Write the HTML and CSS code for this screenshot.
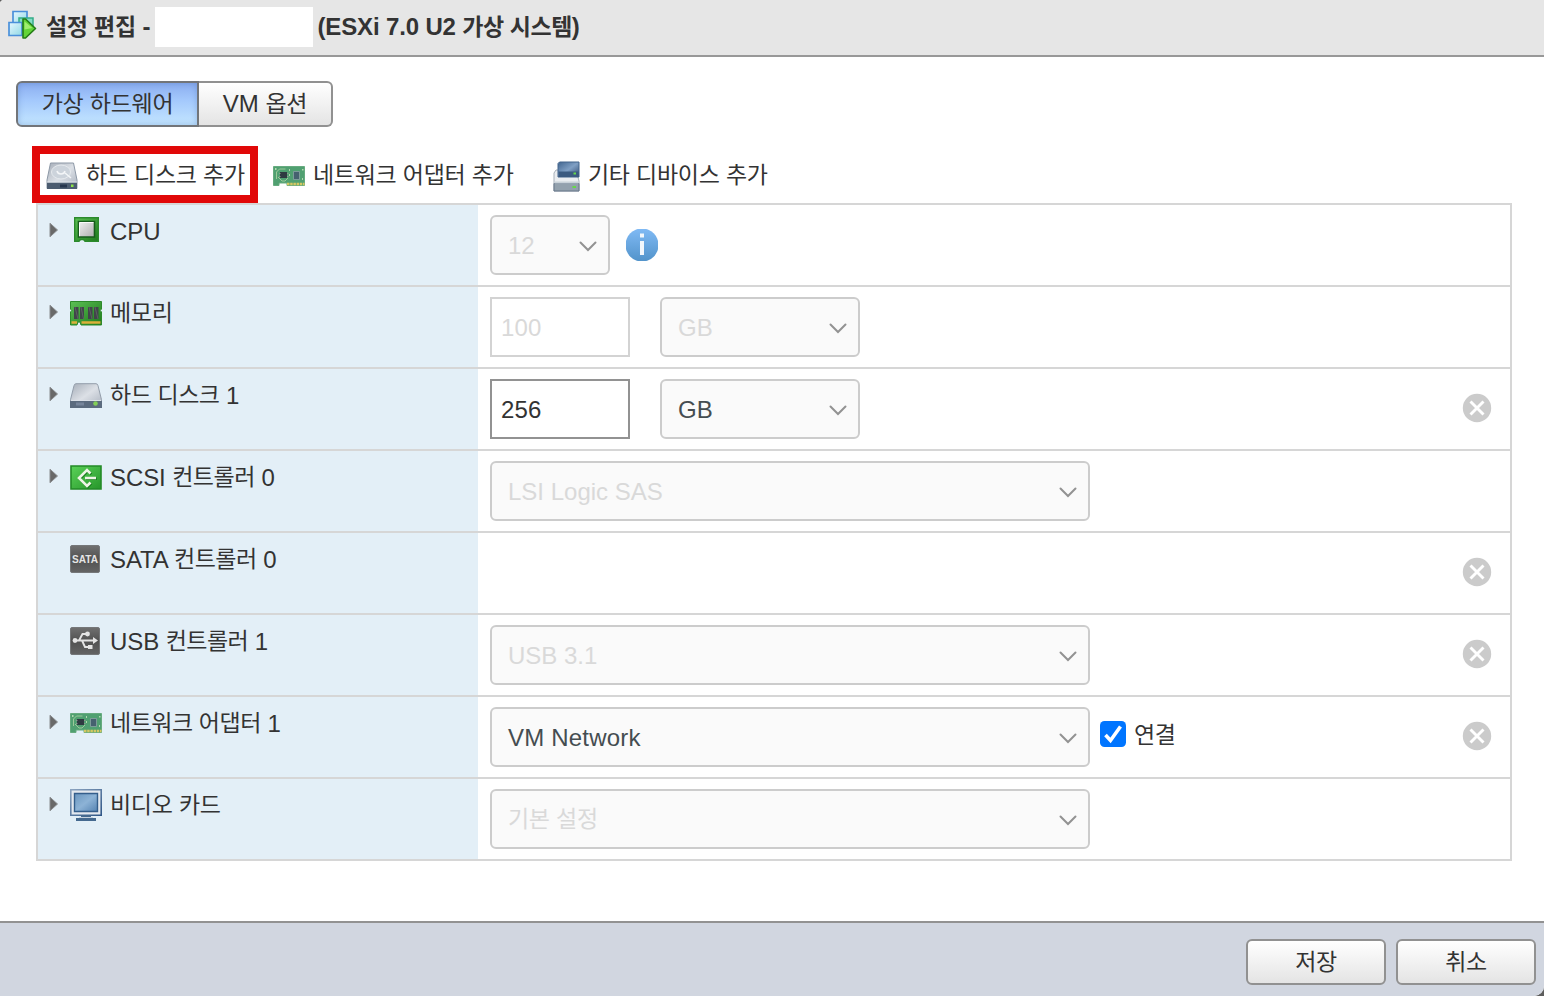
FILE: index.html
```html
<!DOCTYPE html>
<html lang="ko">
    <head>
        <meta charset="utf-8" />
        <title>설정 편집</title>
        <link rel="stylesheet" href="styles.css">
    </head>

    <body>
        <!-- shared icons -->
        <svg class="sprite" width="0" height="0">
            <defs>
                <linearGradient id="g-metal" x1="0" y1="0" x2="1" y2="1">
                    <stop offset="0" stop-color="#a5adb8" />
                    <stop offset=".5" stop-color="#dce0e6" />
                    <stop offset="1" stop-color="#a9b1bd" />
                </linearGradient>
                <linearGradient id="g-chip" x1="0" y1="0" x2="1" y2="1">
                    <stop offset="0" stop-color="#f2f2f2" />
                    <stop offset="1" stop-color="#adadad" />
                </linearGradient>
                <linearGradient id="g-green" x1="0" y1="0" x2="1" y2="1">
                    <stop offset="0" stop-color="#5cc054" />
                    <stop offset="1" stop-color="#1e7a1c" />
                </linearGradient>
                <linearGradient id="g-scsi" x1="0" y1="0" x2="1" y2="1">
                    <stop offset="0" stop-color="#5ad258" />
                    <stop offset="1" stop-color="#27962b" />
                </linearGradient>
                <linearGradient id="g-dark" x1="0" y1="0" x2="0" y2="1">
                    <stop offset="0" stop-color="#707070" />
                    <stop offset=".5" stop-color="#515151" />
                    <stop offset="1" stop-color="#646464" />
                </linearGradient>
                <linearGradient id="g-blue" x1="0" y1="0" x2="0" y2="1">
                    <stop offset="0" stop-color="#80baf5" />
                    <stop offset="1" stop-color="#5293ca" />
                </linearGradient>
                <linearGradient id="g-screen" x1="0" y1="0" x2="1" y2="1">
                    <stop offset="0" stop-color="#6b96bf" />
                    <stop offset=".5" stop-color="#8db3d6" />
                    <stop offset="1" stop-color="#5583b2" />
                </linearGradient>
                <linearGradient id="g-frame" x1="0" y1="0" x2="1" y2="1">
                    <stop offset="0" stop-color="#8ba3bf" />
                    <stop offset="1" stop-color="#2f5687" />
                </linearGradient>
                <linearGradient id="g-navy" x1="0" y1="0" x2="1" y2="1">
                    <stop offset="0" stop-color="#41658f" />
                    <stop offset=".5" stop-color="#7f9fc4" />
                    <stop offset="1" stop-color="#2d486d" />
                </linearGradient>
                <linearGradient id="g-cyan" x1="0" y1="0" x2="1" y2="1">
                    <stop offset="0" stop-color="#e5f7ff" />
                    <stop offset="1" stop-color="#91d9e5" />
                </linearGradient>
            </defs>
            <symbol id="i-arrow" viewBox="0 0 10 16">
                <path d="M1 1.2 8.500 8 1 14.8z" fill="#696969" stroke="#8b8e91" />
            </symbol>
            <symbol id="i-chevron" viewBox="0 0 18 12">
                <path d="M1.500 1.500 9 9l7.500-7.500" fill="none" stroke="#929292" stroke-width="2" stroke-linecap="round" />
            </symbol>
            <symbol id="i-remove" viewBox="0 0 30 30">
                <circle cx="15" cy="15" r="14.200" fill="#cbcbcb" />
                <path d="m8.500 8.500 13 13M21.500 8.500l-13 13" stroke="#fff" stroke-width="2.900" />
            </symbol>
            <symbol id="i-nic" viewBox="0 0 32 20">
                <path d="M.5.500h31v19H14V17H6v2.500H.5z" fill="#50a071" stroke="#67ab7f" />
                <path d="M3.500 13V6l3-3h6M5 11l4 4h3l3-3" fill="none" stroke="#a4ce9e" stroke-width=".9" />
                <path d="M2 2h1.500v2H2zM16 3h1v2h-1zM16 8h1v2h-1zM29 3h1.500v1.500H29zM29 12h1v2h-1z" fill="#b0d8ae" />
                <path d="M7 6h7v6H7z" fill="#2f3a41" />
                <path d="M6 7.500h1.500M6 10.500h1.500M14 7.500h1.500M14 10.500h1.500" stroke="#8d988f" />
                <path d="M20.500 5.500h6v8h-6z" fill="#46616f" stroke="#94a7ac" stroke-width=".7" />
                <path d="M14 18h17.500" stroke="#d5c862" stroke-width="2.500" stroke-dasharray="2.500 .7" />
            </symbol>
        </svg>

        <div class="dialog">
            <div class="dialog-header">
                <svg class="vm-icon" width="30" height="30" viewBox="0 0 30 30">
                    <path d="M6 1.500h14v13H6z" fill="url(#g-cyan)" stroke="#4a90da" stroke-width="1.700" />
                    <path d="M12 8h14v12H12z" fill="#83dcc4" stroke="#35ad89" stroke-width="1.500" />
                    <path d="M2 12.500h13v13H2z" fill="url(#g-cyan)" stroke="#4a90da" stroke-width="1.700" />
                    <path d="M16 9v19h2.500l10-9.500L18.500 9z" fill="#63d438" stroke="#247c17" stroke-width="1.600" stroke-linejoin="round" />
                    <path d="M17.500 11.500v8l8-1.500z" fill="#a1ed70" />
                </svg>
                <span class="title"><span class="ko">설정 편집</span> -</span>
                <span class="redacted"></span>
                <span class="title title-version">(ESXi 7.0 U2 <span class="ko">가상 시스템</span>)</span>
            </div>

            <div class="dialog-content">
                <div class="tabs">
                    <button class="tab tab-hardware active"><span class="ko">가상 하드웨어</span></button>
                    <button class="tab tab-options">VM <span class="ko">옵션</span></button>
                </div>

                <div class="toolbar">
                    <div class="tool tool-disk highlighted">
                        <svg width="32" height="28" viewBox="0 0 32 28">
                            <path d="M4.500 1h23L31 18v8.500H1V18z" fill="url(#g-metal)" stroke="#8d98a6" />
                            <ellipse cx="15" cy="10" rx="9.500" ry="7" fill="#ccd3db" stroke="#e6eaee" />
                            <path d="M11 9c1 4 7 4 8 0M19 11l6 5" fill="none" stroke="#f4f6f8" stroke-width="1.500" />
                            <path d="M1 20.500h30V27H1z" fill="#4c5c70" />
                            <path d="M1 20h30" stroke="#e0e5ea" />
                            <path d="M14 22.500h7v3h-7z" fill="#26364d" />
                            <path d="M25 22.500h2.500V25H25z" fill="#8ce446" />
                        </svg>
                        <span class="ko">하드 디스크 추가</span>
                    </div>
                    <div class="tool tool-network">
                        <svg width="32" height="20"><use href="#i-nic" /></svg>
                        <span class="ko">네트워크 어댑터 추가</span>
                    </div>
                    <div class="tool tool-other">
                        <svg width="27" height="31" viewBox="0 0 27 31">
                            <path d="M3 9h20l3 11v10H1V12z" fill="#eaedf0" stroke="#a7b0b9" />
                            <path d="M1 22.500h25V30H1z" fill="#93a1ad" stroke="#667789" />
                            <path d="M1.500 21.500h24" stroke="#c9d2d9" stroke-width="2" />
                            <path d="M6.500 1H26v15H5V2.500z" fill="url(#g-navy)" stroke="#43648c" />
                            <path d="M5.500 10.500h20V16h-20z" fill="#3b5a80" />
                            <path d="M20.500 11.500h2.500v2h-2.500zM19.500 25h3.500v2h-3.500z" fill="#66d84a" />
                        </svg>
                        <span class="ko">기타 디바이스 추가</span>
                    </div>
                </div>

                <div class="hardware">
                    <div class="row">
                        <div class="label">
                            <svg class="arrow" width="10" height="16"><use href="#i-arrow" /></svg>
                            <div class="icon icon-cpu">
                                <svg width="25" height="25" viewBox="0 0 25 25">
                                    <path d="M.7.700h23.600v23.600H11L9.500 22.500h-3L5 24.300H.7z" fill="url(#g-green)" stroke="#2b8a2c" stroke-width="1.400" />
                                    <path d="M4.500 4.500h16v15.500h-16z" fill="url(#g-chip)" stroke="#175c1c" stroke-width="1.600" />
                                    <path d="M5.500 19.200V5.500h14" fill="none" stroke="#fafafa" />
                                </svg>
                            </div>
                            <span class="name">CPU</span>
                        </div>
                        <div class="value">
                            <div class="select select-xs disabled"><span class="name">12</span><svg width="18" height="12"><use href="#i-chevron" /></svg></div>
                            <svg class="info" width="32" height="32" viewBox="0 0 32 32">
                                <circle cx="16" cy="16" r="16.500" fill="url(#g-blue)" />
                                <path d="M14 4.500h4v4h-4zM14 12h4v14h-4z" fill="#f2f7fc" />
                            </svg>
                        </div>
                    </div>

                    <div class="row">
                        <div class="label">
                            <svg class="arrow" width="10" height="16"><use href="#i-arrow" /></svg>
                            <div class="icon">
                                <svg width="32" height="25" viewBox="0 0 32 25">
                                    <path d="M.5.500h31V8q-2.500 1.500 0 3v13H11l-1-3H8l-1 3H.5V11q2.500-1.500 0-3z" fill="url(#g-green)" stroke="#2e8a2b" />
                                    <path d="M4 6h4.500v12H4zM10 6h4v12h-4zM18 6h4.500v12H18zM24 6h4.500v12H24z" fill="#41454a" />
                                    <path d="M5 6l3 12M11 6l2.500 12M19 6l3 12M25 6l3 12" stroke="#5d6163" />
                                    <path d="M1.500 21.500H7M11.500 21.500h19" stroke="#dcb03a" stroke-width="2.400" />
                                </svg>
                            </div>
                            <span class="ko">메모리</span>
                        </div>
                        <div class="value">
                            <input class="size" type="text" value="100" disabled />
                            <div class="select select-sm disabled"><span class="name">GB</span><svg width="18" height="12"><use href="#i-chevron" /></svg></div>
                        </div>
                    </div>

                    <div class="row">
                        <div class="label">
                            <svg class="arrow" width="10" height="16"><use href="#i-arrow" /></svg>
                            <div class="icon">
                                <svg width="32" height="25" viewBox="0 0 32 25">
                                    <path d="M6 .7h20q1.500 0 2 2l3.500 14V24H.5v-7.300L4 2.700q.5-2 2-2z" fill="url(#g-metal)" stroke="#939daa" />
                                    <path d="M0 18h32v7H0z" fill="#5b6b7e" />
                                    <path d="M6 19.500h8v3H6z" fill="#76859a" />
                                    <path d="M1 17.500h30" stroke="#dce1e7" />
                                    <circle cx="25.500" cy="20.500" r="2.300" fill="#83cf57" />
                                </svg>
                            </div>
                            <span class="name"><span class="ko">하드 디스크</span> 1</span>
                        </div>
                        <div class="value">
                            <input class="size" type="text" value="256" />
                            <div class="select select-sm"><span class="name">GB</span><svg width="18" height="12"><use href="#i-chevron" /></svg></div>
                            <svg class="remove" width="30" height="30"><use href="#i-remove" /></svg>
                        </div>
                    </div>

                    <div class="row">
                        <div class="label">
                            <svg class="arrow" width="10" height="16"><use href="#i-arrow" /></svg>
                            <div class="icon">
                                <svg width="32" height="25" viewBox="0 0 32 25">
                                    <path d="M1 1h30v23H1z" fill="url(#g-scsi)" stroke="#238b27" stroke-width="1.600" />
                                    <path d="m20.500 8.500-3.500-3.500L9 13l8 8 3.500-3.500M15 13h11" transform="translate(.8 .8)" fill="none" stroke="#197b1d" stroke-width="2.600" />
                                    <path d="m20.500 8.500-3.500-3.500L9 13l8 8 3.500-3.500M15 13h11" fill="none" stroke="#edf5e6" stroke-width="2.600" />
                                </svg>
                            </div>
                            <span class="name">SCSI <span class="ko">컨트롤러</span> 0</span>
                        </div>
                        <div class="value">
                            <div class="select select-lg disabled"><span class="name">LSI Logic SAS</span><svg width="18" height="12"><use href="#i-chevron" /></svg></div>
                        </div>
                    </div>

                    <div class="row">
                        <div class="label">
                            <div class="arrow"></div>
                            <div class="icon icon-controller">
                                <svg width="30" height="28" viewBox="0 0 30 28">
                                    <rect x=".5" y=".5" width="29" height="27" rx="1.500" fill="url(#g-dark)" stroke="#757779" />
                                    <text class="sata" x="15" y="17.500" text-anchor="middle" textLength="26" lengthAdjust="spacingAndGlyphs">SATA</text>
                                </svg>
                            </div>
                            <span class="name">SATA <span class="ko">컨트롤러</span> 0</span>
                        </div>
                        <div class="value">
                            <svg class="remove" width="30" height="30"><use href="#i-remove" /></svg>
                        </div>
                    </div>

                    <div class="row">
                        <div class="label">
                            <div class="arrow"></div>
                            <div class="icon icon-controller">
                                <svg width="30" height="28" viewBox="0 0 30 28">
                                    <rect x=".5" y=".5" width="29" height="27" rx="1.500" fill="url(#g-dark)" stroke="#757779" />
                                    <path d="M4 13.500h21M9 13.500l3.500-6.500h5M12 13.500l3 6.500h5" fill="none" stroke="#e4e4e4" stroke-width="1.900" />
                                    <circle cx="5" cy="13.500" r="2.400" fill="#e4e4e4" />
                                    <circle cx="17.500" cy="7" r="2.400" fill="#e4e4e4" />
                                    <path d="M18 18h4.500v4H18zM23 10l5 3.500-5 3.500z" fill="#e4e4e4" />
                                </svg>
                            </div>
                            <span class="name">USB <span class="ko">컨트롤러</span> 1</span>
                        </div>
                        <div class="value">
                            <div class="select select-lg disabled"><span class="name">USB 3.1</span><svg width="18" height="12"><use href="#i-chevron" /></svg></div>
                            <svg class="remove" width="30" height="30"><use href="#i-remove" /></svg>
                        </div>
                    </div>

                    <div class="row">
                        <div class="label">
                            <svg class="arrow" width="10" height="16"><use href="#i-arrow" /></svg>
                            <div class="icon">
                                <svg width="32" height="20"><use href="#i-nic" /></svg>
                            </div>
                            <span class="name"><span class="ko">네트워크 어댑터</span> 1</span>
                        </div>
                        <div class="value">
                            <div class="select select-lg"><span class="name network">VM Network</span><svg width="18" height="12"><use href="#i-chevron" /></svg></div>
                            <label class="connect">
                                <svg width="26" height="26" viewBox="0 0 26 26">
                                    <rect width="26" height="26" rx="4.500" fill="#0075ff" />
                                    <path d="m5.500 14 5 5.500L20.500 5.500" fill="none" stroke="#fff" stroke-width="3.600" />
                                </svg>
                                <span class="ko">연결</span>
                            </label>
                            <svg class="remove" width="30" height="30"><use href="#i-remove" /></svg>
                        </div>
                    </div>

                    <div class="row">
                        <div class="label">
                            <svg class="arrow" width="10" height="16"><use href="#i-arrow" /></svg>
                            <div class="icon">
                                <svg width="32" height="32" viewBox="0 0 32 32">
                                    <path d="M.8.800h30.400v25.400H.8z" fill="#e4e9ef" stroke="url(#g-frame)" stroke-width="1.600" />
                                    <path d="M4.500 4.500h23v18h-23z" fill="url(#g-screen)" stroke="#345e8b" stroke-width="1.400" />
                                    <path d="M11 26h10v3h5v3H6v-3h5z" fill="#45698f" />
                                    <path d="M9 28.500h14" stroke="#c6d2df" />
                                </svg>
                            </div>
                            <span class="ko">비디오 카드</span>
                        </div>
                        <div class="value">
                            <div class="select select-lg disabled"><span class="ko">기본 설정</span><svg width="18" height="12"><use href="#i-chevron" /></svg></div>
                        </div>
                    </div>
                </div>
            </div>

            <div class="dialog-footer">
                <button class="btn"><span class="ko">저장</span></button>
                <button class="btn"><span class="ko">취소</span></button>
            </div>
        </div>
    </body>
</html>
```
FILE: styles.css
```css
* {
    box-sizing: border-box;
}

body {
    margin: 0;
    background: #5d5d5d;
    color: #333;
    font-family: "Liberation Sans", "Noto Sans CJK KR", sans-serif;
    font-size: 24px;
    line-height: 32px;
}

svg {
    display: block;
    flex: none;
}

.sprite {
    position: absolute;
}

.ko {
    font-size: 23px;
    letter-spacing: -0.3px;
    word-spacing: 0.3px;
}

.dialog {
    display: flex;
    flex-direction: column;
    width: 1544px;
    height: 996px;
    background: #fff;
    border-radius: 4px 0 10px 0;
    overflow: hidden;
}

.dialog-header {
    display: flex;
    height: 57px;
    padding: 7px 7px 0;
    background: #e6e6e6;
    border-bottom: 2px solid #989898;
    font-weight: bold;
}

.vm-icon {
    margin: 3px 9px 0 0;
}

.title {
    padding-top: 4px;
    white-space: nowrap;
}

.title-version {
    letter-spacing: -0.15px;
}

.title-version .ko {
    letter-spacing: -0.5px;
}

.redacted {
    width: 158px;
    height: 40px;
    margin: 0 5px 0 4px;
    background: #fff;
}

.dialog-content {
    flex: 1;
}

.tabs {
    display: flex;
    padding: 24px 16px 0;
}

.tab,
.btn {
    height: 46px;
    padding: 0;
    border: 2px solid #919191;
    background: linear-gradient(#fff, #e4e4e4);
    color: #333;
    font: inherit;
}

.tab-hardware {
    width: 183px;
    border-radius: 6px 0 0 6px;
}

.tab-options {
    width: 134px;
    border-left: 0;
    border-radius: 0 6px 6px 0;
}

.tab.active {
    border-color: #727579;
    background: linear-gradient(#8aadf0, #a3c8fc 40%, #c4e6ff);
    box-shadow: inset 0 0 6px rgba(50, 90, 160, 0.3);
}

.toolbar {
    display: flex;
    height: 57px;
    margin: 19px 0 0 32px;
}

.tool {
    display: flex;
    align-items: center;
    white-space: nowrap;
}

.tool-disk {
    width: 226px;
    padding-left: 6px;
    gap: 8px;
}

.tool-disk svg {
    margin-top: 3px;
}

.highlighted {
    border: 8px solid #e10808;
}

.tool-network {
    width: 280px;
    padding-left: 15px;
    gap: 8px;
}

.tool-other {
    gap: 8px;
    padding-left: 15px;
}

.tool-other svg,
.tool-network svg {
    margin-top: 3px;
}

.hardware {
    width: 1476px;
    margin-left: 36px;
    border: 2px solid #d6d6d6;
}

.row {
    display: flex;
    height: 82px;
    border-bottom: 2px solid #d6d6d6;
}

.row:last-child {
    height: 80px;
    border-bottom: 0;
}

.label {
    display: flex;
    align-items: center;
    width: 440px;
    height: 100%;
    padding: 0 0 28px 11px;
    background: #e3eff7;
    white-space: nowrap;
}

.name {
    padding-top: 2px;
}

.label .name {
    letter-spacing: -0.1px;
}

.name .ko {
    letter-spacing: -0.5px;
    vertical-align: 1px;
    line-height: 1;
}

.arrow {
    width: 10px;
    margin: -2px 11px 0 0;
}

.icon {
    display: flex;
    justify-content: center;
    width: 32px;
    margin-right: 8px;
}

.icon-cpu {
    margin-top: -3px;
}

.icon-controller {
    justify-content: flex-start;
}

.value {
    display: flex;
    flex: 1;
    align-items: center;
    padding: 0 18px 0 12px;
}

.select {
    display: flex;
    align-items: center;
    justify-content: space-between;
    height: 60px;
    padding: 0 11px 0 16px;
    border: 2px solid #ccc;
    border-radius: 6px;
    background: #fafafa;
    color: #454d51;
}

.select svg {
    margin-top: 3px;
}

.select-xs {
    width: 120px;
}

.select-sm {
    width: 200px;
}

.select-lg {
    width: 600px;
}

.disabled {
    color: #d9d9d9;
}

.network {
    letter-spacing: 0.2px;
}

.size {
    width: 140px;
    height: 60px;
    margin-right: 30px;
    padding: 2px 9px 0;
    border: 2px solid #929292;
    border-radius: 0;
    background: #fff;
    color: #333;
    font: inherit;
    letter-spacing: 0.2px;
}

.size:disabled {
    border-color: #d3d3d3;
    color: #d9d9d9;
}

.info {
    margin-left: 16px;
}

.connect {
    display: flex;
    align-items: center;
    gap: 8px;
    margin: -6px 0 0 10px;
}

.connect .ko {
    padding-top: 2px;
}

.remove {
    margin: -2px 0 0 auto;
}

.sata {
    fill: #e5e5e5;
    font-size: 11px;
    font-weight: bold;
}

.dialog-footer {
    display: flex;
    justify-content: flex-end;
    gap: 10px;
    height: 75px;
    padding: 16px 8px 0;
    border-top: 2px solid #929292;
    background: #d1d6e0;
}

.btn {
    width: 140px;
    border-radius: 6px;
}
```
